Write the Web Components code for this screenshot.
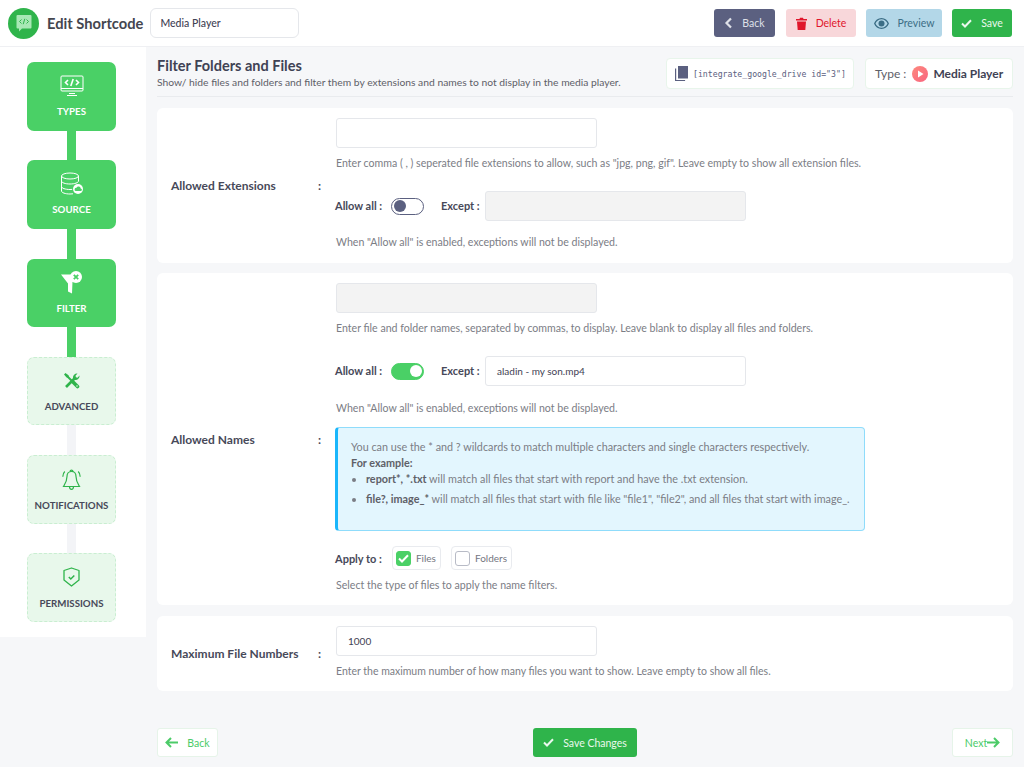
<!DOCTYPE html>
<html><head><meta charset="utf-8"><style>
html,body{margin:0;padding:0;background:#f6f7f9;font-family:Lato,"Open Sans",sans-serif;color:#3f4254}
body{width:1024px;height:767px;overflow:hidden}
sc-app{display:block}
</style></head><body>
<sc-app></sc-app>
<script>
const I={
left:'<svg width="9" height="12" viewBox="0 0 9 12"><path d="M7 1.500 2.500 6 7 10.500" fill="none" stroke="currentColor" stroke-width="2.200"/></svg>',
trash:'<svg width="11" height="13" viewBox="0 0 11 13"><path fill="currentColor" d="M0 2h3.500l.5-1.200h3L7.500 2H11v1.500H0zM1 4.500h9l-.7 8.500H1.700z"/></svg>',
eye:'<svg width="15" height="11" viewBox="0 0 15 11"><path fill="currentColor" fill-rule="evenodd" d="M7.500 0C4 0 1.300 2.200 0 5.500 1.300 8.800 4 11 7.500 11S13.700 8.800 15 5.500C13.700 2.200 11 0 7.500 0zm0 9.700c-2.700 0-4.900-1.600-6-4.200 1.100-2.600 3.300-4.200 6-4.200s4.900 1.600 6 4.200c-1.100 2.600-3.300 4.200-6 4.200z"/><circle cx="7.500" cy="5.500" r="3" fill="currentColor"/></svg>',
check:'<svg width="11" height="9" viewBox="0 0 11 9"><path d="M1 4.500 4 7.500 10 1.200" fill="none" stroke="currentColor" stroke-width="2"/></svg>',
arrowL:'<svg width="13" height="11" viewBox="0 0 13 11"><path d="M6 1 1.500 5.500 6 10M2 5.500h11" fill="none" stroke="currentColor" stroke-width="2"/></svg>',
arrowR:'<svg width="13" height="11" viewBox="0 0 13 11"><path d="M7 1l4.500 4.500L7 10M11 5.500H0" fill="none" stroke="currentColor" stroke-width="2"/></svg>',
copy:'<svg width="13" height="15" viewBox="0 0 13 15"><path fill="#5b6080" d="M3 0h10v12.500H3z"/><path fill="none" stroke="#5b6080" stroke-width="1.200" d="M.6 2.500v12h9.500"/></svg>',
play:'<svg width="16" height="16" viewBox="0 0 16 16"><defs><linearGradient id="p" x1="0" y1="0" x2="1" y2="1"><stop offset="0" stop-color="#fd8a7e"/><stop offset="1" stop-color="#f9647f"/></linearGradient></defs><circle cx="8" cy="8" r="8" fill="url(#p)"/><path fill="#fff" d="M6 4.500 11.500 8 6 11.500z"/></svg>',
logo:'<svg width="31" height="31" viewBox="0 0 31 31"><circle cx="15.500" cy="15.500" r="15.500" fill="#2fb44b"/><path fill="#a8e8b5" d="M9.500 7h13a1 1 0 0 1 1 1v11.500a1 1 0 0 1-1 1h-8.500l-3 3v-3h-1.500a1 1 0 0 1-1-1V8a1 1 0 0 1 1-1z"/><path fill="none" stroke="#2fb44b" stroke-width="1" d="M13.500 11.500 11.500 13.500l2 2M18.500 11.500l2 2-2 2M16.800 10.800l-1.600 5.400"/></svg>',
types:'<svg width="24" height="22" viewBox="0 0 24 22" fill="none" stroke="#fff" stroke-width="1"><rect x="1" y="1" width="22" height="15" rx="1"/><path d="M1 13.500h22M9 18.500h6M7 20.500h10" /><path stroke-width="1.600" d="M8 5 5.500 7.500 8 10M16 5l2.500 2.500L16 10M13.200 4l-2.400 7"/></svg>',
source:'<svg width="24" height="24" viewBox="0 0 24 24" fill="none" stroke="#fff" stroke-width="1"><ellipse cx="10" cy="4" rx="8.500" ry="3"/><path d="M1.500 4v15c0 1.700 3.800 3 8.500 3 1 0 2-.1 3-.2M1.500 9c0 1.700 3.800 3 8.500 3s8.500-1.300 8.500-3V4M1.500 14.500c0 1.700 3.800 3 8.500 3 .8 0 1.500 0 2.200-.1"/><circle cx="18" cy="17" r="5" fill="#fff" stroke="none"/><path fill="#4ad066" stroke="none" d="M15.500 19h5a1.300 1.300 0 0 0 .2-2.600 2.200 2.200 0 0 0-4.200-.6 1.700 1.700 0 0 0-1 3.200z"/></svg>',
filter:'<svg width="21" height="23" viewBox="0 0 21 23"><path fill="#fff" d="M0 3.500h11L11.500 10.500 11 22.500 7 20.500V12.500z"/><circle cx="15" cy="6" r="6" fill="#fff"/><path stroke="#4ad066" stroke-width="1.800" d="M12.800 3.800l4.400 4.400M17.200 3.800l-4.400 4.400"/></svg>',
adv:'<svg width="16" height="16" viewBox="0 0 16 16"><path fill="none" stroke="#2fb44b" stroke-width="2" d="M2.500 2.500 8 8"/><path fill="none" stroke="#2fb44b" stroke-width="3.600" stroke-linecap="round" d="M9 9 13.500 13.500"/><path fill="none" stroke="#2fb44b" stroke-width="2.600" d="M2 14 10.500 5.500"/><path fill="#2fb44b" d="M9 5A4 4 0 0 1 13.500.5l-2 2.200.4 1.600 1.600.4L15.500 2.500A4 4 0 0 1 11 7z"/><path fill="#2fb44b" d="M0 1.500 1.500 0l3.200 2.500v2h-2z"/><circle cx="13" cy="13" r=".8" fill="#dff5e4"/></svg>',
bell:'<svg width="19" height="21" viewBox="0 0 19 21" fill="none" stroke="#2fb44b" stroke-width="1.200"><path d="M9.500 2.500C6.500 2.500 5 4.700 5 7.500c0 5-1.500 7-3.500 10h16c-2-3-3.500-5-3.500-10 0-2.800-1.500-5-4.500-5zM8 2.300C8.300.6 10.700.6 11 2.300M7.500 17.500a2 2.800 0 0 0 4 0M2.800 2.500C1.200 4 .8 6 .8 7.800M16.200 2.500C17.800 4 18.200 6 18.200 7.800"/></svg>',
shield:'<svg width="17" height="20" viewBox="0 0 17 20" fill="none" stroke="#2fb44b" stroke-width="1.300"><path d="M8.500 1 16 3.500v9.500L8.500 19 1 13V3.500z" stroke-linejoin="round"/><path stroke-width="1.500" d="M5.800 10l2 2 3.500-3.500"/></svg>'
};
function el(name,css,html){customElements.define(name,class extends HTMLElement{connectedCallback(){if(this.shadowRoot)return;const s=this.attachShadow({mode:'open'});s.innerHTML='<style>svg{display:block;flex:none}'+css+'</style>'+(typeof html==='function'?html(this):html)}})}
el('sc-btn',`:host{display:inline-flex;align-items:center;justify-content:center;height:28px;box-sizing:border-box;border-radius:3px;font-size:10.500px;gap:9px;padding:0 4px;border:1px solid transparent;white-space:nowrap}
:host([v=dark]){background:#5b6080;color:#dfe1e8}
:host([v=red]){background:#f8d7da;color:#e0162b}
:host([v=blue]){background:#b3d7e8;color:#3c6e86}
:host([v=green]){background:#2fb44b;color:#eaf8ed}
:host([v=light]){background:#fff;border-color:#e6f4e9;color:#4ccb68}
span{display:block}`,t=>`${I[t.getAttribute('i')]||''}<span><slot></slot></span>${I[t.getAttribute('e')]||''}`);
el('sc-input',`:host{display:block;box-sizing:border-box;height:30px;border:1px solid #e5e7eb;border-radius:3px;background:#fff;font-size:10px;color:#3f4254;line-height:28px;padding:0 11px;width:261px}
:host([off]){background:#f3f3f3}`,'<slot></slot>');
el('sc-hint',`:host{display:block;font-size:10.600px;color:#7b7d85;line-height:16px;white-space:nowrap}`,'<slot></slot>');
el('sc-toggle',`:host{display:block;width:33px;height:17px;box-sizing:border-box;border-radius:9px;border:1px solid #5b6080;background:#fff;position:relative}
:host([on]){background:#4ad066;border-color:#4ad066}
i{position:absolute;top:1.500px;left:1.500px;width:12px;height:12px;border-radius:50%;background:#5b6080}
:host([on]) i{left:auto;right:1.500px;background:#fff}`,'<i></i>');
el('sc-chk',`:host{display:flex;align-items:center;gap:5px;height:24px;box-sizing:border-box;border:1px solid #e9ebef;border-radius:4px;padding:0 4px 0 3px;font-size:10px;font-weight:400;color:#74767f;background:#fff}
b{display:flex;align-items:center;justify-content:center;width:15px;height:15px;border-radius:3px;border:1px solid #b8bbc6;color:#fff;box-sizing:border-box}
:host([on]) b{background:#4ad066;border-color:#4ad066}`,t=>`<b>${t.hasAttribute('on')?I.check:''}</b><slot></slot>`);
el('sc-row',`:host{display:flex;align-items:center;font-size:11px;font-weight:700;color:#474959;height:30px;margin-left:-1px}
span{padding-bottom:2px}.a{width:56px}.t{width:50px;padding:0}.e{width:44px}`,t=>`<span class="a">Allow all :</span><span class="t"><sc-toggle ${t.hasAttribute('on')?'on':''}></sc-toggle></span><span class="e">Except :</span><sc-input ${t.hasAttribute('on')?'':'off'} style="font-weight:400">${t.getAttribute('val')||''}</sc-input>`);
el('sc-field',`:host{display:grid;grid-template-columns:147px 18px 1fr;align-items:center;background:#fff;border-radius:6px;padding:10px 14px 12px;margin-bottom:10px}
.l,.c{font-size:12px;font-weight:700;color:#474959;padding-top:2px}.m{min-width:0}`,t=>`<div class="l">${t.getAttribute('label')}</div><div class="c">:</div><div class="m"><slot></slot></div>`);
el('sc-step',`:host{display:block;width:89px;height:68.500px;box-sizing:border-box;border-radius:7px;position:relative;text-align:center;background:#e8f8eb;border:1px dashed #c9eed1;color:#474959;font-size:9.700px;font-weight:700;z-index:1}
:host([on]){background:#4ad066;border:0;color:#fff}
.i{height:24px;display:flex;align-items:center;justify-content:center;padding-top:12px}
:host(:not([on])) .i{padding-top:11px}
:host(:not([on])) .t{margin-top:6.500px}
.t{line-height:14px;margin-top:6px}`,t=>`<div class="i">${I[t.getAttribute('i')]}</div><div class="t"><slot></slot></div>`);
el('sc-side',`:host{display:flex;flex-direction:column;width:146px;height:590px;box-sizing:border-box;background:#fff;padding:15px 0 0 27px;flex:none}
.b{width:9px;height:29.800px;margin-left:40px;background:#f3f4f7}.b.on{background:#4ad066}`,
()=>`<sc-step on i="types">TYPES</sc-step><div class="b on"></div><sc-step on i="source">SOURCE</sc-step><div class="b on"></div><sc-step on i="filter">FILTER</sc-step><div class="b on"></div><sc-step i="adv">ADVANCED</sc-step><div class="b"></div><sc-step i="bell">NOTIFICATIONS</sc-step><div class="b"></div><sc-step i="shield">PERMISSIONS</sc-step>`);
el('sc-top',`:host{display:flex;align-items:center;height:47px;box-sizing:border-box;background:#fff;border-bottom:1px solid #eff0f3;padding:0 12px 0 8px}
h1{margin:0 7px 0 8px;font-size:14.700px;font-weight:700;color:#44464f;white-space:nowrap}
.r{margin-left:auto;display:flex;gap:10px}
.r sc-btn:first-child{margin-right:1px}
sc-input{width:149px;height:30px;font-size:10.500px;font-weight:500;border-radius:6px;padding-left:9px}`,
`${I.logo}<h1>Edit Shortcode</h1><sc-input>Media Player</sc-input><div class="r"><sc-btn v="dark" i="left" style="width:61px">Back</sc-btn><sc-btn v="red" i="trash" style="width:70px">Delete</sc-btn><sc-btn v="blue" i="eye" style="width:76px">Preview</sc-btn><sc-btn v="green" i="check" style="width:60px">Save</sc-btn></div>`);
el('sc-head',`:host{display:flex;align-items:flex-start;height:50px;box-sizing:border-box;border-bottom:1px solid #e9ebee;margin-bottom:11px;padding-top:11px}
h2{margin:0;font-size:14.500px;font-weight:700;line-height:16px;color:#3f4254}
p{margin:2px 0 0;font-size:10.300px;line-height:13px;color:#5e6068;white-space:nowrap}
.r{margin-left:auto;display:flex;gap:11px}
.s,.y{display:flex;align-items:center;background:#fff;height:31px;box-sizing:border-box;border:1px solid #e8f5eb;border-radius:4px;white-space:nowrap}
.s{width:188px;padding-left:8px;gap:5px;font:8.200px "DejaVu Sans Mono","Liberation Mono",monospace;color:#5b6080}
.y{width:148px;padding-left:9px;font-size:12px;color:#5e6068;gap:5px}
.y svg{margin-left:1px}
.y b{font-weight:700;color:#3f4254}`,
`<div><h2>Filter Folders and Files</h2><p>Show/ hide files and folders and filter them by extensions and names to not display in the media player.</p></div><div class="r"><div class="s">${I.copy}<span>[integrate_google_drive id="3"]</span></div><div class="y"><span>Type :</span>${I.play}<b>Media Player</b></div></div>`);
el('sc-info',`:host{display:block;box-sizing:border-box;width:530px;height:104px;margin:11px 0 15px -1px;background:#e3f6fe;border:1px solid #8fdcfb;border-left:3px solid #1ab6fb;border-radius:4px;padding:11px 12px 11px 13px;font-size:10.800px;line-height:16px;color:#7b7d85;white-space:nowrap}
b{font-weight:700;color:#5e6068}
ul{margin:0;padding:0 0 0 15px}li{margin-bottom:4px}`,
`You can use the * and ? wildcards to match multiple characters and single characters respectively.<br><b>For example:</b><ul><li><b>report*, *.txt</b> will match all files that start with report and have the .txt extension.</li><li><b>file?, image_*</b> will match all files that start with file like "file1", "file2", and all files that start with image_.</li></ul>`);
el('sc-apply',`:host{display:flex;align-items:center;gap:10px;font-size:11px;font-weight:700;color:#474959;height:24px;margin-left:-1px}`,
`<span>Apply to :</span><sc-chk on>Files</sc-chk><sc-chk>Folders</sc-chk>`);
el('sc-foot',`:host{display:flex;justify-content:space-between;align-items:center;margin-top:37px}
sc-btn{height:29px}`,
`<sc-btn v="light" i="arrowL" style="width:61px">Back</sc-btn><sc-btn v="green" i="check" style="width:104px">Save Changes</sc-btn><sc-btn v="light" e="arrowR" style="width:61px;gap:0">Next</sc-btn>`);
el('sc-app',`:host{display:block}
.w{display:flex;align-items:flex-start}
.m{flex:1;padding:0 11px;min-width:0}
.g7{margin-top:7px}.g13{margin-top:13px}.g14{margin-top:14px}.g20{margin-top:20px}`,
`<sc-top></sc-top><div class="w"><sc-side></sc-side><div class="m"><sc-head></sc-head>
<sc-field label="Allowed Extensions" style="padding-bottom:13px"><sc-input></sc-input><sc-hint class="g7">Enter comma ( , ) seperated file extensions to allow, such as "jpg, png, gif". Leave empty to show all extension files.</sc-hint><sc-row class="g20"></sc-row><sc-hint class="g13">When "Allow all" is enabled, exceptions will not be displayed.</sc-hint></sc-field>
<sc-field label="Allowed Names"><sc-input off></sc-input><sc-hint class="g7">Enter file and folder names, separated by commas, to display. Leave blank to display all files and folders.</sc-hint><sc-row class="g20" on val="aladin - my son.mp4"></sc-row><sc-hint class="g14">When "Allow all" is enabled, exceptions will not be displayed.</sc-hint><sc-info></sc-info><sc-apply></sc-apply><sc-hint class="g7">Select the type of files to apply the name filters.</sc-hint></sc-field>
<sc-field label="Maximum File Numbers" style="margin-top:11px"><sc-input>1000</sc-input><sc-hint class="g7" style="font-size:10.500px">Enter the maximum number of how many files you want to show. Leave empty to show all files.</sc-hint></sc-field>
<sc-foot></sc-foot></div></div>`);
</script>
</body></html>
